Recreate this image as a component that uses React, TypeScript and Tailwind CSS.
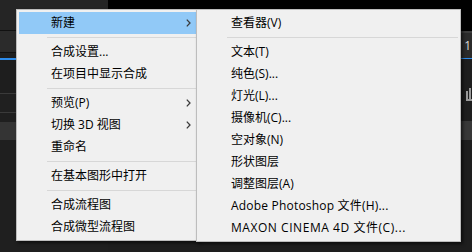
import React from "react";

type Item =
  | { kind: "item"; label: string; sub?: boolean; active?: boolean; wide?: string }
  | { kind: "sep" };

const leftMenu: Item[] = [
  { kind: "item", label: "新建", sub: true, active: true },
  { kind: "sep" },
  { kind: "item", label: "合成设置..." },
  { kind: "item", label: "在项目中显示合成" },
  { kind: "sep" },
  { kind: "item", label: "预览(P)", sub: true },
  { kind: "item", label: "切换 3D 视图", sub: true },
  { kind: "item", label: "重命名" },
  { kind: "sep" },
  { kind: "item", label: "在基本图形中打开" },
  { kind: "sep" },
  { kind: "item", label: "合成流程图" },
  { kind: "item", label: "合成微型流程图" },
];

const rightMenu: Item[] = [
  { kind: "item", label: "查看器(V)" },
  { kind: "sep" },
  { kind: "item", label: "文本(T)" },
  { kind: "item", label: "纯色(S)..." },
  { kind: "item", label: "灯光(L)..." },
  { kind: "item", label: "摄像机(C)..." },
  { kind: "item", label: "空对象(N)" },
  { kind: "item", label: "形状图层" },
  { kind: "item", label: "调整图层(A)" },
  { kind: "item", label: "Adobe Photoshop 文件(H)...", wide: "tracking-[0.2px]" },
  { kind: "item", label: "MAXON CINEMA 4D 文件(C)...", wide: "tracking-[0.55px]" },
];

const Chevron = () => (
  <svg width="5" height="8" viewBox="0 0 5 8" className="absolute right-[5px] top-[7px]">
    <path d="M0.8 0.6 L4 4 L0.8 7.4" fill="none" stroke="#3a3a3a" strokeWidth="1.3" />
  </svg>
);

const MenuList = ({ items }: { items: Item[] }) => (
  <div className="flex flex-col">
    {items.map((it, i) =>
      it.kind === "sep" ? (
        <div key={i} className="h-[7px] flex items-center pl-[28px]">
          <div className="h-px w-full bg-[#d7d7d7]" />
        </div>
      ) : (
        <div
          key={i}
          className={`relative h-[22px] flex items-center pl-[32px] text-[12px] text-black ${
            it.active ? "bg-[#91c9f7]" : ""
          }`}
        >
          <span className={`leading-none ${it.wide ?? ""}`}>{it.label}</span>
          {it.sub && <Chevron />}
        </div>
      )
    )}
  </div>
);

export default function App() {
  return (
    <div
      className="relative w-[472px] h-[252px] overflow-hidden bg-[#1f1f1f]"
      style={{ fontFamily: '"Open Sans", "Noto Sans CJK SC", sans-serif' }}
    >
      {/* app behind the menu */}
      <div className="flex h-full">
        <div className="w-[108px] flex flex-col">
          <div className="h-[30px] bg-[#252525]" />
          <div className="h-px bg-[#111111]" />
          <div className="h-[21px] bg-[#2b2b2b]" />
          <div className="h-px bg-[#121212]" />
          <div className="h-[5px] bg-[#1f1f1f]" />
          <div className="h-[2px] bg-[#2d8ceb]" />
          <div className="h-[33px] bg-[#1e1e1e]" />
          <div className="h-px bg-[#3a3a3a]" />
          <div className="h-[18px] bg-[#202020]" />
          <div className="h-px bg-[#3a3a3a]" />
          <div className="h-[9px] bg-[#1f1f1f]" />
          <div className="h-[18px] bg-[#343434]" />
          <div className="flex-1 bg-[#1f1f1f]" />
        </div>
        <div className="flex-1 flex flex-col">
          <div className="h-[31px] bg-black" />
          <div className="h-[2px] bg-[#3c3c3c]" />
          <div className="h-[25px] bg-[#2b2b2b] flex items-center justify-end">
            <span className="text-[12px] text-[#d8d8d8] mr-[1px] leading-none">1</span>
          </div>
          <div className="h-px bg-[#2d8ceb]" />
          <div className="h-[62px] bg-[#1e1e1e] flex items-center justify-end pt-[8px]">
            <svg width="8" height="13" viewBox="0 0 8 13" className="mr-[-2px]">
              <rect x="0" y="3" width="2" height="10" fill="#9a9a9a" />
              <rect x="3" y="0" width="2" height="13" fill="#9a9a9a" />
              <rect x="6" y="5" width="2" height="8" fill="#9a9a9a" />
              <rect x="0" y="11" width="8" height="2" fill="#9a9a9a" />
            </svg>
          </div>
          <div className="h-[19px] bg-[#383838]" />
          <div className="flex-1 bg-[#1e1e1e]" />
        </div>
      </div>

      {/* context menu */}
      <div className="absolute left-[16px] top-[9px] w-[183px] h-[232px] p-[2px] bg-[#f0f0f0] border border-[#bdbdbd] shadow-[2px_2px_3px_rgba(0,0,0,0.55)]">
        <MenuList items={leftMenu} />
      </div>

      {/* submenu */}
      <div className="absolute left-[196px] top-[9px] w-[265px] h-[233px] p-[2px] bg-[#f0f0f0] border border-[#bdbdbd] shadow-[2px_2px_3px_rgba(0,0,0,0.55)]">
        <MenuList items={rightMenu} />
      </div>
    </div>
  );
}
